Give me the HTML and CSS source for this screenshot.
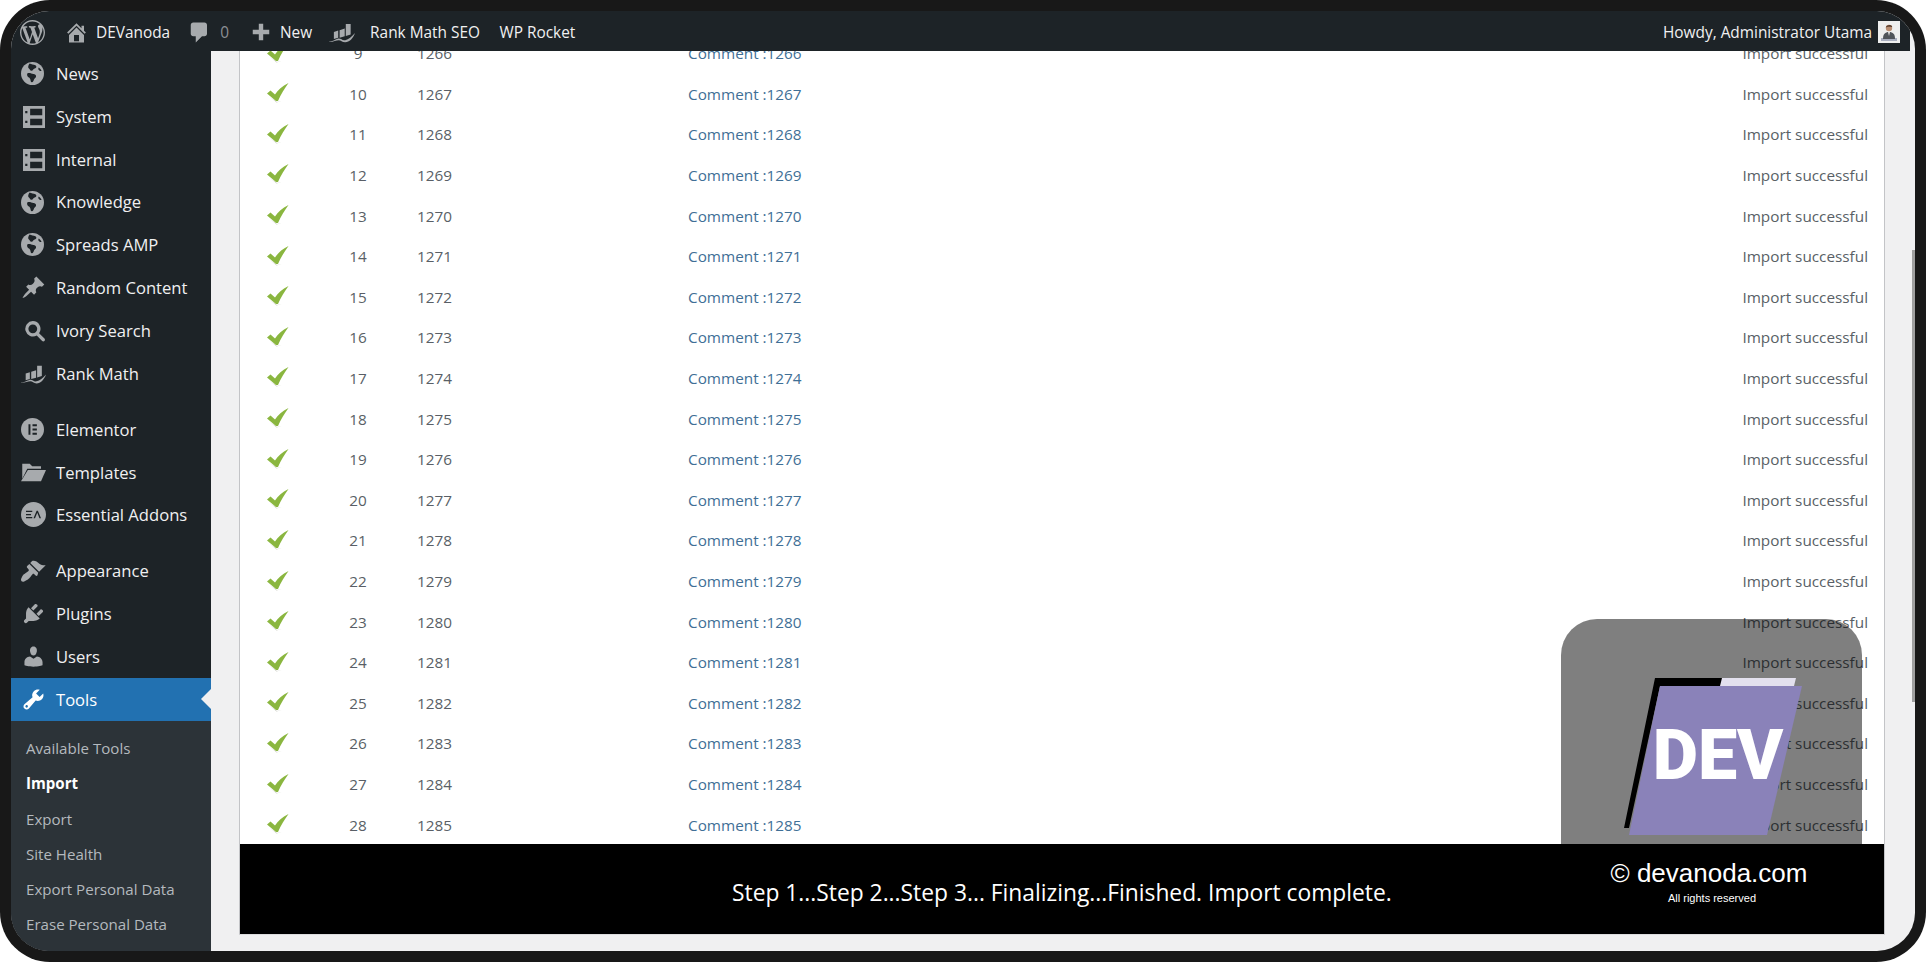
FILE: index.html
```html
<!DOCTYPE html>
<html lang="en">
<head>
<meta charset="utf-8">
<title>Import</title>
<link rel="stylesheet" href="styles.css">
</head>
<body>
<svg class="defs" width="0" height="0" aria-hidden="true">
  <symbol id="i-wp" viewBox="0 0 20 20"><path fill-rule="evenodd" d="M20 10c0-5.51-4.49-10-10-10C4.48 0 0 4.49 0 10c0 5.52 4.48 10 10 10 5.51 0 10-4.48 10-10zM7.78 15.37L4.37 6.22c.55-.02 1.17-.08 1.17-.08.5-.06.44-1.13-.06-1.11 0 0-1.45.11-2.37.11-.18 0-.37 0-.58-.01C4.12 2.69 6.87 1.11 10 1.11c2.33 0 4.45.87 6.05 2.34-.68-.11-1.65.39-1.65 1.58 0 .74.45 1.36.9 2.1.35.61.55 1.36.55 2.46 0 1.49-1.4 5-1.4 5l-3.03-8.37c.54-.02.82-.17.82-.17.5-.05.44-1.25-.06-1.22 0 0-1.44.12-2.38.12-.87 0-2.33-.12-2.33-.12-.5-.03-.56 1.2-.06 1.22l.92.08 1.26 3.41zM17.41 10c.24-.64.74-1.87.43-4.25.7 1.29 1.05 2.71 1.05 4.25 0 3.29-1.73 6.24-4.4 7.78.97-2.59 1.94-5.2 2.92-7.78zM6.1 18.09C3.12 16.65 1.11 13.53 1.11 10c0-1.3.23-2.48.72-3.59C3.25 10.3 4.67 14.2 6.1 18.09zm4.03-6.63l2.58 6.98c-.86.29-1.76.45-2.71.45-.79 0-1.57-.11-2.29-.33.81-2.38 1.62-4.74 2.42-7.1z"/></symbol>
  <symbol id="i-home" viewBox="0 0 20 20"><path fill-rule="evenodd" d="M16 8.5l1.53 1.53-1.06 1.06L10 4.62l-6.47 6.47-1.06-1.06L10 2.5l4 4v-2h2v4zm-6-2.46l6 5.99V18H4v-5.97zM12 17v-5H8v5h4z"/></symbol>
  <symbol id="i-bubble" viewBox="0 0 20 20"><path d="M5 2h9c1.1 0 2 .9 2 2v7c0 1.1-.9 2-2 2h-2l-5 5v-5H5c-1.1 0-2-.9-2-2V4c0-1.1.9-2 2-2z"/></symbol>
  <symbol id="i-plus" viewBox="0 0 20 20"><path d="M17.500 8v4H12v5.500H8V12H2.500V8H8V2.500h4V8z"/></symbol>
  <symbol id="i-rank" viewBox="0 0 24 20"><path d="M4.500 10l4-1.300v6.500l-4 1.300zM9.800 8.300l4.700-1.500v7.200l-4.700 1.200zM15.500 2.500h4.500v9.800l-4.500 1.500z"/><path d="M0 18.800c4.500-.3 7-2.800 9-2.800 2.500 0 3 2 6 1.500 3-.5 6-3 9-6.500-1.800 5-5.200 8.500-9 8.500-3 0-4-2-6-2-2.500 0-5.500 1.800-9 1.500z"/></symbol>
  <symbol id="i-globe" viewBox="0 0 20 20"><circle cx="10" cy="10" r="10"/><path class="cut" d="M7.500 1.300c1.500.9 3.500.6 5 1.600 1.500 1 .9 2.500-.6 2.800-1.500.3-1.300 1.900-2.700 2-1.600.1-1.300-1.700-2.500-2.200C5.800 5 6.300 2.500 7.500 1.300zM5.800 9.800c1.700-.6 3.400.4 5 .7 1.300.3 2.500.7 2.300 2.100-.2 1.300-1.400 1.500-1.800 2.600-.4 1.100-.8 2.500-2 2.300-1.200-.2-.8-2-1.400-3-.6-1-2.300-1.500-2.500-2.700-.1-.8-.2-1.800.4-2zM15.500 4.800c.9.700 2 1.800 2.400 3-.8.400-2-.2-2.600-1-.4-.6-.3-1.500.2-2z"/></symbol>
  <symbol id="i-page" viewBox="0 0 20 20"><path fill-rule="evenodd" d="M0 0h20v20H0zM6.500 2.500v6H17.500v-6zM6.500 11.500v6H17.500v-6zM2 4.500v2h2v-2zM2 13.500v2h2v-2z"/></symbol>
  <symbol id="i-pin" viewBox="0 0 20 20"><path d="M10.44 3.020l1.820-1.820 6.360 6.350-1.830 1.820c-1.050-.68-2.480-.57-3.410.36l-.75.75c-.92.93-1.040 2.350-.35 3.410l-1.830 1.820-2.410-2.410-2.800 2.790c-.42.42-3.380 2.710-3.800 2.290s1.860-3.390 2.280-3.810l2.790-2.790L4.100 9.360l1.830-1.820c1.050.69 2.480.57 3.400-.36l.75-.75c.93-.92 1.050-2.350.36-3.410z"/></symbol>
  <symbol id="i-search" viewBox="0 0 20 20"><path fill-rule="evenodd" d="M8 1a7 7 0 0 1 5.700 11l4.900 4.900c.6.6.6 1.500 0 2.100s-1.500.6-2.100 0l-4.900-4.900A7 7 0 1 1 8 1zm0 3a4 4 0 1 0 0 8 4 4 0 0 0 0-8z"/></symbol>
  <symbol id="i-elementor" viewBox="0 0 20 20"><circle cx="10" cy="10" r="10"/><path class="cut" d="M6.500 5.500h1.700v9H6.500zM10 5.500h3.800v1.700H10zM10 9.150h3.800v1.700H10zM10 12.800h3.800v1.700H10z"/></symbol>
  <symbol id="i-folder" viewBox="0 0 20 20"><path d="M1 3h6l2 2h7v2H5L1 15z"/><path d="M5.500 8H20l-4 9H0z"/></symbol>
  <symbol id="i-ea" viewBox="0 0 20 20"><circle cx="10" cy="10" r="10"/><path class="cut" d="M4 7h5v1H4zM4 9.500h4v1H4zM4 12h5v1H4zM10 13l2.500-6h1l2.500 6h-1.200l-1.800-4.400-1.800 4.400z"/></symbol>
  <symbol id="i-brush" viewBox="0 0 20 20"><path d="M14.480 11.060L7.410 3.990l1.500-1.500c.5-.56 2.300-.47 3.510.32 1.210.8 1.430 1.280 2.910 2.100 1.180.64 2.450 1.260 4.450.85zm-.71.71L6.700 4.700 4.930 6.470c-.39.39-.39 1.020 0 1.410l1.060 1.060c.39.39.39 1.030 0 1.420-.6.6-1.430 1.110-2.210 1.690-.35.26-.7.53-1.010.84C1.430 13.230 0 16.940 0 17.400c0 .83.71 1.600 1.600 1.600s3.850-1.600 5.060-2.830c.3-.3.6-.64.87-.97.58-.77 1.090-1.610 1.690-2.210.39-.39 1.020-.39 1.410 0l1.060 1.060c.39.39 1.020.39 1.410 0z"/></symbol>
  <symbol id="i-plug" viewBox="0 0 20 20"><path d="M13.110 4.360L9.870 7.600 8 5.730l3.240-3.240c.35-.34 1.050-.2 1.560.32.52.51.66 1.210.31 1.550zm-8 1.770l.91-1.120 9.010 9.010-1.190.84c-.71.71-2.630 1.160-3.820 1.160H6.140L4.900 17.260c-.59.59-1.540.59-2.120 0-.59-.58-.59-1.530 0-2.120l1.240-1.240v-3.880c0-1.130.4-3.190 1.090-3.890zm7.260 3.970l3.240-3.240c.34-.35 1.040-.21 1.550.31.52.51.66 1.210.31 1.550l-3.240 3.250z"/></symbol>
  <symbol id="i-user" viewBox="0 0 20 20"><path d="M10 9.250c-2.270 0-2.730-3.440-2.730-3.440C7 4.020 7.820 2 9.970 2c2.160 0 2.980 2.020 2.710 3.810 0 0-.41 3.440-2.680 3.440zm0 2.570L12.720 10c2.390 0 4.520 2.330 4.520 4.530v2.490s-3.650 1.130-7.240 1.130c-3.650 0-7.240-1.130-7.240-1.130v-2.490c0-2.250 1.940-4.480 4.470-4.480z"/></symbol>
  <symbol id="i-tool" viewBox="0 0 20 20"><path fill-rule="evenodd" d="M16.680 9.770c-1.340 1.340-3.300 1.670-4.950.99l-5.410 6.520c-.99.99-2.590.99-3.580 0s-.99-2.590 0-3.570l6.520-5.420c-.68-1.650-.35-3.610.99-4.950 1.280-1.280 3.120-1.620 4.720-1.060l-2.890 2.890 2.820 2.820 2.860-2.870c.53 1.580.18 3.390-1.080 4.650zM3.810 16.210c.4.39 1.040.39 1.430 0 .4-.4.4-1.040 0-1.430-.39-.4-1.030-.4-1.430 0-.39.39-.39 1.030 0 1.430z"/></symbol>
  <symbol id="i-check" viewBox="0 0 22 20"><path class="check-shadow" d="M3 14l6.500 5.500 5.500-1.500-5 1z"/><path class="check-mark" d="M0 10.500L3.500 7.500l4.500 4C11 7 15 3 21.500 0c-4 5.500-7.500 11-10.500 18H9z"/></symbol>
</svg>

<div class="frame">
  <div class="shell">
    <header class="adminbar">
      <svg class="bar-icon wp"><use href="#i-wp"/></svg>
      <svg class="bar-icon home"><use href="#i-home"/></svg>
      <span class="bar-text site">DEVanoda</span>
      <svg class="bar-icon bubble"><use href="#i-bubble"/></svg>
      <span class="bar-text count">0</span>
      <svg class="bar-icon plus"><use href="#i-plus"/></svg>
      <span class="bar-text new">New</span>
      <svg class="bar-icon rank"><use href="#i-rank"/></svg>
      <span class="bar-text rank-label">Rank Math SEO</span>
      <span class="bar-text rocket">WP Rocket</span>
      <span class="bar-text howdy">Howdy, Administrator Utama</span>
      <svg class="avatar" viewBox="0 0 22 22"><rect width="22" height="22" fill="#eeeeee"/><rect x="3" y="17" width="16" height="3" fill="#a9aebf"/><path d="M5 18c0-5 2-7 6-7s6 2 6 7z" fill="#50545a"/><path d="M10 11h2l-1 4z" fill="#e8e8e8"/><circle cx="11" cy="7" r="3.200" fill="#b98d72"/><path d="M7.800 6.500C8 3.500 14 3 14.200 6c-2 .2-4.400-.7-6.400.5z" fill="#5c4030"/></svg>
    </header>
    <div class="workspace">
      <nav class="sidebar">
        <ul class="menu">
          <li class="item"><svg class="icon globe"><use href="#i-globe"/></svg>News</li>
          <li class="item"><svg class="icon page"><use href="#i-page"/></svg>System</li>
          <li class="item"><svg class="icon page"><use href="#i-page"/></svg>Internal</li>
          <li class="item"><svg class="icon globe"><use href="#i-globe"/></svg>Knowledge</li>
          <li class="item"><svg class="icon globe"><use href="#i-globe"/></svg>Spreads AMP</li>
          <li class="item"><svg class="icon"><use href="#i-pin"/></svg>Random Content</li>
          <li class="item"><svg class="icon search"><use href="#i-search"/></svg>Ivory Search</li>
          <li class="item"><svg class="icon"><use href="#i-rank"/></svg>Rank Math</li>
          <li class="item sep"><svg class="icon globe"><use href="#i-elementor"/></svg>Elementor</li>
          <li class="item"><svg class="icon"><use href="#i-folder"/></svg>Templates</li>
          <li class="item"><svg class="icon"><use href="#i-ea"/></svg>Essential Addons</li>
          <li class="item sep"><svg class="icon"><use href="#i-brush"/></svg>Appearance</li>
          <li class="item"><svg class="icon"><use href="#i-plug"/></svg>Plugins</li>
          <li class="item"><svg class="icon"><use href="#i-user"/></svg>Users</li>
          <li class="item active"><svg class="icon"><use href="#i-tool"/></svg>Tools</li>
        </ul>
        <ul class="submenu">
          <li>Available Tools</li>
          <li class="current">Import</li>
          <li>Export</li>
          <li>Site Health</li>
          <li>Export Personal Data</li>
          <li>Erase Personal Data</li>
        </ul>
      </nav>
      <main class="main">
        <section class="card">
          <div class="rows">
            <div class="row"><svg class="check"><use href="#i-check"/></svg><span class="num">9</span><span class="id">1266</span><a class="link">Comment :1266</a><span class="status">Import successful</span></div>
            <div class="row"><svg class="check"><use href="#i-check"/></svg><span class="num">10</span><span class="id">1267</span><a class="link">Comment :1267</a><span class="status">Import successful</span></div>
            <div class="row"><svg class="check"><use href="#i-check"/></svg><span class="num">11</span><span class="id">1268</span><a class="link">Comment :1268</a><span class="status">Import successful</span></div>
            <div class="row"><svg class="check"><use href="#i-check"/></svg><span class="num">12</span><span class="id">1269</span><a class="link">Comment :1269</a><span class="status">Import successful</span></div>
            <div class="row"><svg class="check"><use href="#i-check"/></svg><span class="num">13</span><span class="id">1270</span><a class="link">Comment :1270</a><span class="status">Import successful</span></div>
            <div class="row"><svg class="check"><use href="#i-check"/></svg><span class="num">14</span><span class="id">1271</span><a class="link">Comment :1271</a><span class="status">Import successful</span></div>
            <div class="row"><svg class="check"><use href="#i-check"/></svg><span class="num">15</span><span class="id">1272</span><a class="link">Comment :1272</a><span class="status">Import successful</span></div>
            <div class="row"><svg class="check"><use href="#i-check"/></svg><span class="num">16</span><span class="id">1273</span><a class="link">Comment :1273</a><span class="status">Import successful</span></div>
            <div class="row"><svg class="check"><use href="#i-check"/></svg><span class="num">17</span><span class="id">1274</span><a class="link">Comment :1274</a><span class="status">Import successful</span></div>
            <div class="row"><svg class="check"><use href="#i-check"/></svg><span class="num">18</span><span class="id">1275</span><a class="link">Comment :1275</a><span class="status">Import successful</span></div>
            <div class="row"><svg class="check"><use href="#i-check"/></svg><span class="num">19</span><span class="id">1276</span><a class="link">Comment :1276</a><span class="status">Import successful</span></div>
            <div class="row"><svg class="check"><use href="#i-check"/></svg><span class="num">20</span><span class="id">1277</span><a class="link">Comment :1277</a><span class="status">Import successful</span></div>
            <div class="row"><svg class="check"><use href="#i-check"/></svg><span class="num">21</span><span class="id">1278</span><a class="link">Comment :1278</a><span class="status">Import successful</span></div>
            <div class="row"><svg class="check"><use href="#i-check"/></svg><span class="num">22</span><span class="id">1279</span><a class="link">Comment :1279</a><span class="status">Import successful</span></div>
            <div class="row"><svg class="check"><use href="#i-check"/></svg><span class="num">23</span><span class="id">1280</span><a class="link">Comment :1280</a><span class="status">Import successful</span></div>
            <div class="row"><svg class="check"><use href="#i-check"/></svg><span class="num">24</span><span class="id">1281</span><a class="link">Comment :1281</a><span class="status">Import successful</span></div>
            <div class="row"><svg class="check"><use href="#i-check"/></svg><span class="num">25</span><span class="id">1282</span><a class="link">Comment :1282</a><span class="status">Import successful</span></div>
            <div class="row"><svg class="check"><use href="#i-check"/></svg><span class="num">26</span><span class="id">1283</span><a class="link">Comment :1283</a><span class="status">Import successful</span></div>
            <div class="row"><svg class="check"><use href="#i-check"/></svg><span class="num">27</span><span class="id">1284</span><a class="link">Comment :1284</a><span class="status">Import successful</span></div>
            <div class="row"><svg class="check"><use href="#i-check"/></svg><span class="num">28</span><span class="id">1285</span><a class="link">Comment :1285</a><span class="status">Import successful</span></div>
          </div>
          <div class="watermark">
            <svg class="logo" viewBox="0 0 180 160">
              <polygon points="31,0 99,0 99,8 36,8 5,150 0,150" fill="#000000"/>
              <polygon points="98,0 172,0 170,8 96,8" fill="#e3e0ee"/>
              <polygon points="36,8 178,8 143,157 5,157" fill="#8a82b9"/>
              <text class="logo-text" x="94" y="101" text-anchor="middle">DEV</text>
            </svg>
          </div>
          <footer class="band">
            <p class="step">Step 1...Step 2...Step 3... Finalizing...Finished. Import complete.</p>
            <div class="copy">
              <p class="copy-main">© devanoda.com</p>
              <p class="copy-sub">All rights reserved</p>
            </div>
          </footer>
        </section>
        <div class="thumb"></div>
      </main>
    </div>
  </div>
</div>
</body>
</html>
```

FILE: styles.css
```css
* { box-sizing: border-box; }
html, body { margin: 0; padding: 0; background: #ffffff; }
body { width: 1926px; height: 962px; overflow: hidden; font-family: "Open Sans", "Noto Sans", sans-serif; }
p, ul { margin: 0; padding: 0; list-style: none; }
.defs { position: absolute; }
.cut { fill: #1d2327; }

.frame { width: 1926px; height: 962px; padding: 11px; background: #181818; border-radius: 50px; }
.shell { width: 100%; height: 100%; display: flex; flex-direction: column; overflow: hidden; border-radius: 38px; background: #f0f0f1; }

.adminbar { flex: none; width: 1899px; height: 40px; padding-top: 2px; display: flex; align-items: center; background: #1d2327; font-size: 15.4px; color: #f0f0f1; }
.bar-icon { flex: none; fill: #a7aaad; }
.bar-icon.wp { width: 25px; height: 25px; margin-left: 9px; }
.bar-icon.home { width: 25px; height: 25px; margin-left: 19px; }
.site { margin-left: 7px; }
.bar-icon.bubble { width: 25px; height: 25px; margin-left: 17px; }
.count { margin-left: 8px; color: #8c8f94; }
.bar-icon.plus { width: 22px; height: 22px; margin-left: 21px; }
.new { margin-left: 8px; }
.bar-icon.rank { width: 26px; height: 22px; margin-left: 17px; }
.rank-label { margin-left: 15px; }
.rocket { margin-left: 19.500px; }
.howdy { margin-left: auto; margin-right: 6px; }
.avatar { flex: none; width: 22px; height: 22px; margin-right: 10px; }

.workspace { flex: 1; min-height: 0; display: flex; }
.sidebar { flex: none; width: 200px; background: #1d2327; display: flex; flex-direction: column; }
.menu { padding-top: 1px; }
.item { position: relative; height: 42.85px; display: flex; align-items: center; padding-left: 45px; font-size: 16.6px; color: #f0f0f1; }
.item.sep { margin-top: 13px; }
.icon { position: absolute; left: 10px; top: 9px; width: 25px; height: 25px; fill: #a7aaad; }
.icon.globe { width: 23px; height: 23px; left: 10px; top: 10px; }
.icon.page { width: 22px; height: 22px; left: 11.500px; top: 11px; }
.icon.search { width: 22px; height: 22px; left: 13px; top: 11px; }
.item.active { background: #2271b1; color: #ffffff; }
.item.active .icon { fill: #ffffff; }
.item.active::after { content: ""; position: absolute; right: 0; top: 50%; margin-top: -10px; border: 10px solid transparent; border-right-color: #f0f0f1; border-left-width: 0; }
.submenu { flex: 1; background: #2c3338; padding-top: 10px; }
.submenu li { height: 35.2px; display: flex; align-items: center; padding-left: 15px; font-size: 15.100px; color: #b4b9be; }
.submenu li.current { color: #ffffff; font-weight: 700; }

.main { position: relative; flex: 1; min-width: 0; padding-left: 28px; padding-right: 30px; padding-bottom: 16px; }
.card { position: relative; height: 100%; display: flex; flex-direction: column; justify-content: flex-end; overflow: hidden; background: #ffffff; border-left: 1px solid #c3c4c7; border-right: 1px solid #c3c4c7; border-bottom: 1px solid #dcdcde; }
.rows { flex: none; margin-bottom: -1px; }
.row { height: 40.62px; display: grid; grid-template-columns: 60px 62px 299px 1fr auto; align-items: center; padding: 0 16px 0 27px; font-size: 15.300px; color: #595f66; }
.check { width: 22px; height: 20px; margin-bottom: 1px; }
.check-mark { fill: #8ab63f; }
.check-shadow { fill: #c9cdc2; }
.num { text-align: center; }
.id { padding-left: 28px; }
.link { color: #3f6f96; }
.status { text-align: right; }

.watermark { position: absolute; left: 1321px; bottom: 0; width: 301px; height: 315px; background: rgba(0, 0, 0, 0.5); border-radius: 36px; }
.logo { position: absolute; left: 63px; top: 59px; width: 180px; height: 160px; }
.logo-text { font-family: Roboto, "Liberation Sans", sans-serif; font-weight: 900; font-size: 70px; fill: #ffffff; }

.band { position: relative; flex: none; height: 90px; display: flex; align-items: center; justify-content: space-between; padding-left: 492px; padding-right: 76px; background: #000000; color: #ffffff; }
.step { font-size: 22.800px; padding-top: 6px; }
.copy { width: 198px; text-align: center; font-family: "Liberation Sans", Arial, sans-serif; padding-bottom: 15px; }
.copy-main { font-size: 26px; line-height: 30px; }
.copy-sub { font-size: 11px; line-height: 14px; margin-top: 3px; padding-left: 6px; }

.thumb { position: absolute; right: 0; top: 199px; width: 3px; height: 452px; background: #a0a0a0; }
```
